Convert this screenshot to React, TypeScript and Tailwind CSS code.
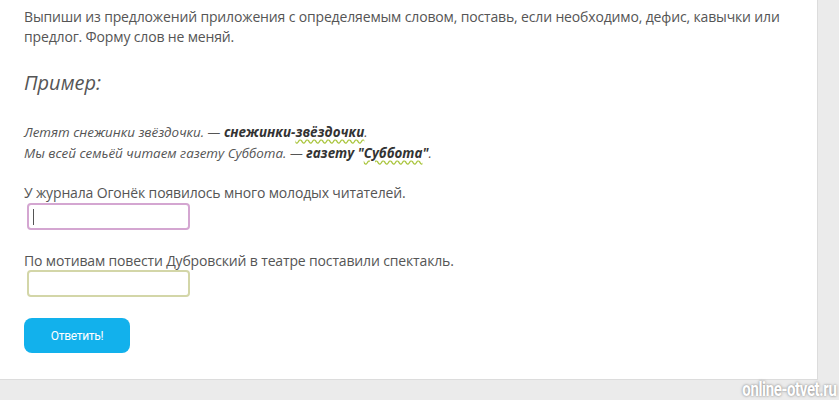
import React from 'react';

export default function App() {
  return (
    <main className="w-[839px] h-[400px] bg-[#ebebeb] overflow-hidden relative font-['Open_Sans',sans-serif]">
      <div className="w-[818px] h-[380px] bg-white border-r border-b border-[#dcdcdc] px-6 pt-[7px] text-[#555]">
        {/* Task */}
        <p className="text-[14px] leading-[20px] tracking-[-0.15px]">
          Выпиши из предложений приложения с определяемым словом, поставь, если необходимо, дефис, кавычки или предлог. Форму слов не меняй.
        </p>

        <h3 className="mt-[23px] text-[20px] leading-[26px] italic text-[#555]">Пример:</h3>

        <div className="mt-[26px] text-[13.4px] leading-[21px] italic">
          <p>
            Летят снежинки звёздочки. —{' '}
            <b className="text-[#333]">
              снежинки-<span className="underline decoration-wavy decoration-[#a8c43a] underline-offset-2">звёздочки</span>
            </b>
            .
          </p>
          <p>
            Мы всей семьёй читаем газету Суббота. —{' '}
            <b className="text-[#333]">
              газету "<span className="underline decoration-wavy decoration-[#a8c43a] underline-offset-2">Суббота</span>"
            </b>
            .
          </p>
        </div>

        {/* Question 1 */}
        <p className="mt-[19px] text-[14px] leading-[20px] tracking-[-0.15px]">У журнала Огонёк появилось много молодых читателей.</p>
        <div className="ml-[3px] w-[163px] h-[27px] rounded-[4px] border-2 border-[#d4a6d1] flex items-center pl-[4px]">
          <span className="w-px h-[16px] bg-[#555]" />
        </div>

        {/* Question 2 */}
        <p className="mt-[21px] text-[14px] leading-[20px] tracking-[-0.15px]">По мотивам повести Дубровский в театре поставили спектакль.</p>
        <div className="ml-[3px] -mt-px w-[163px] h-[27px] rounded-[4px] border-2 border-[#d3d6a8]" />

        <button className="mt-[21px] w-[106px] h-[35px] rounded-[8px] bg-[#12b1ec] text-white text-[12px] font-['Roboto',sans-serif] tracking-[-0.3px]">
          Ответить!
        </button>
      </div>

      {/* Watermark */}
      <div className="absolute right-[3px] bottom-[1px] text-white text-[20px] leading-[19px] font-bold font-['Roboto',sans-serif] tracking-[-0.5px] scale-x-[0.75] origin-right [text-shadow:0_0_3px_rgba(0,0,0,0.5)]">
        online-otvet.ru
      </div>
    </main>
  );
}
